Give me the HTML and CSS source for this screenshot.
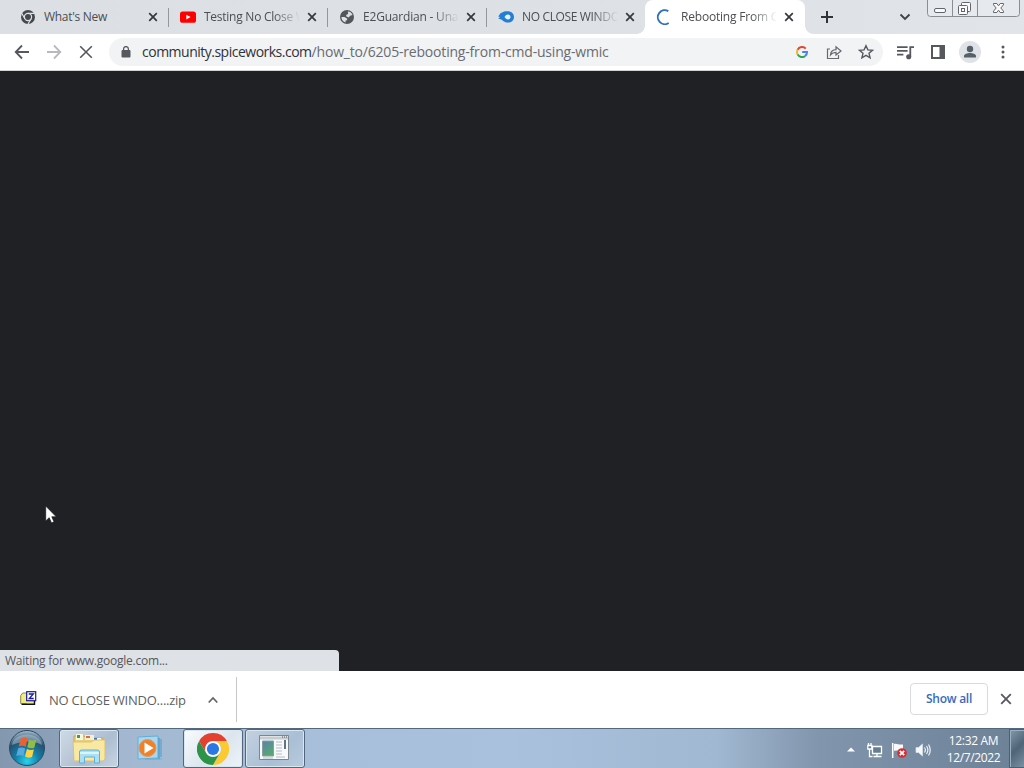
FILE: index.html
```html
<!DOCTYPE html>
<html lang="en">
<head>
<meta charset="utf-8">
<title>Rebooting From CMD</title>
<link rel="stylesheet" href="styles.css">
</head>
<body>
<div class="screen">
  <header class="tabs">
    <div class="tab">
      <svg class="fav" viewBox="0 0 16 16"><circle cx="8" cy="8" r="7" fill="#45494e"/><circle cx="8" cy="8" r="3.6" fill="#45494e" stroke="#dee1e6" stroke-width="1.2"/><path d="M8 4.4h6.4M4.9 9.8 1.7 4.3M11.1 9.8 8 15" stroke="#dee1e6" stroke-width="1.2"/></svg>
      <span class="title t1">What's New</span>
      <svg class="x" viewBox="0 0 10 10"><path d="m1.2 1.2 7.6 7.6m0-7.6L1.2 8.8"/></svg>
    </div>
    <div class="tab line">
      <svg class="fav" viewBox="0 0 16 16"><rect y="2.4" width="16" height="11.4" rx="2.6" fill="#f00"/><path d="m6.3 5.7 4.3 2.4-4.3 2.4z" fill="#fff"/></svg>
      <span class="title fade t2">Testing No Close W</span>
      <svg class="x" viewBox="0 0 10 10"><path d="m1.2 1.2 7.6 7.6m0-7.6L1.2 8.8"/></svg>
    </div>
    <div class="tab line">
      <svg class="fav" viewBox="0 0 16 16"><circle cx="8" cy="8" r="7" fill="#53575c"/><path d="M8.8 2.5c2.6 0 4.1 1.8 4.7 3.6L11 6.7 9.8 8.5 7.1 7.2l.3-1.4 1.8-.8zM2.4 8h3.200l2.700 1.700-.4 1.500-1.500.6.3 1.700C4 12.800 2.500 10.800 2.400 8z" fill="#dee1e6"/></svg>
      <span class="title fade t3">E2Guardian - Una</span>
      <svg class="x" viewBox="0 0 10 10"><path d="m1.2 1.2 7.6 7.6m0-7.6L1.2 8.8"/></svg>
    </div>
    <div class="tab line">
      <svg class="fav" viewBox="0 0 16 16"><path d="M2.500 4.200C5 2.600 7 2 10 2.200c3.600.2 6 2.600 6 5.700 0 3.400-2.500 5.700-6 5.700-2.800 0-4.300-.9-6.200-2.800L.2 9.600l2-1.500-2-.6z" fill="#247fd2"/><path d="M6.500 8.100c1-1.800 2-2.600 3.500-2.600s2.500 1.100 2.500 2.500-1 2.500-2.500 2.500-2.500-.8-3.500-2.400z" fill="#e5f2fb"/></svg>
      <span class="title fade t4">NO CLOSE WINDO</span>
      <svg class="x" viewBox="0 0 10 10"><path d="m1.2 1.2 7.6 7.6m0-7.6L1.2 8.8"/></svg>
    </div>
    <div class="tab active">
      <svg class="fav" viewBox="0 0 16 16"><path d="M12.3 2.1A7 7 0 1 0 12.7 14" fill="none" stroke="#2f6fc4" stroke-width="1.9"/></svg>
      <span class="title fade t5">Rebooting From C</span>
      <svg class="x" viewBox="0 0 10 10"><path d="m1.2 1.2 7.6 7.6m0-7.6L1.2 8.8"/></svg>
    </div>
    <svg class="plus" viewBox="0 0 14 14"><path d="M7 1v12M1 7h12" stroke="#303338" stroke-width="2"/></svg>
    <svg class="down" viewBox="0 0 12 8"><path d="m1.5 1.5 4.5 4.5 4.5-4.5" fill="none" stroke="#404449" stroke-width="1.9"/></svg>
    <svg class="caption" viewBox="0 0 94 18"><path d="M.5-1v14.500q0 3 3 3h86q3 0 3-3V-1M25.500 0v16.500M50.500 0v16.500" fill="#e6e9ed" stroke="#8a8e93"/><g fill="#fafafa" stroke="#62666b"><rect x="7.500" y="8.500" width="11" height="4" rx="1.500"/><rect x="34.500" y="2.500" width="9" height="9" rx="1"/><rect x="31.500" y="5.500" width="9" height="9" rx="1"/><rect x="34.500" y="8.500" width="3" height="3"/><path d="M66.500 3.500h3.300l1.700 2.300 1.700-2.300h3.300v1.300L73.800 8l2.700 3.200v1.300h-3.300l-1.700-2.300-1.700 2.300h-3.300v-1.300L69.200 8l-2.700-3.200z"/></g></svg>
  </header>

  <nav class="toolbar">
    <svg class="ic back" viewBox="0 0 16 16"><path d="M15 8H2M8 1.500 1.700 8 8 14.500" fill="none" stroke="#55595e" stroke-width="1.800"/></svg>
    <svg class="ic fwd" viewBox="0 0 16 16"><path d="M1 8h13M8 1.500 14.300 8 8 14.500" fill="none" stroke="#b7b9bc" stroke-width="1.800"/></svg>
    <svg class="ic stop" viewBox="0 0 16 16"><path d="m2.200 2.200 11.600 11.600m0-11.600L2.200 13.800" stroke="#55595e" stroke-width="1.600"/></svg>
    <div class="omnibox">
      <svg class="lock" viewBox="0 0 10 12"><rect x=".5" y="4" width="9" height="7.500" rx="1" fill="#55595e"/><path d="M2.600 4.500V3a2.400 2.400 0 0 1 4.800 0v1.500" fill="none" stroke="#55595e" stroke-width="1.300"/></svg>
      <span class="url"><b>community.spiceworks.com</b>/how_to/6205-rebooting-from-cmd-using-wmic</span>
      <svg class="g" viewBox="0 0 12 12"><g fill="none" stroke-width="2"><path d="M9.700 2.600A5 5 0 0 0 1.600 3.700" stroke="#e54335"/><path d="M1.600 3.700a5 5 0 0 0 0 4.700" stroke="#f4b72a"/><path d="M1.600 8.400a5 5 0 0 0 7.600 1.500" stroke="#34a353"/><path d="M9.200 9.900A5 5 0 0 0 11 6H6.200" stroke="#4285f4"/></g></svg>
      <svg class="share" viewBox="0 0 16 16"><path d="M4 5H1.500v9.500h11V11M4.500 11c.3-3.500 2.300-5.200 5.500-5.300V2.800L15 7l-5 4V8.300C7.600 8.300 6 9 4.500 11z" fill="none" stroke="#666a6f" stroke-width="1.200"/></svg>
      <svg class="star" viewBox="0 0 16 16"><path d="m8 1.700 1.900 4.200 4.600.4-3.500 3 1.100 4.500L8 11.400l-4.100 2.400L5 9.300l-3.500-3 4.600-.4z" fill="none" stroke="#55595e" stroke-width="1.400"/></svg>
    </div>
    <svg class="ic music" viewBox="0 0 16 16"><path d="M0 3h10M0 6.500h10M0 10h6M12.500 12V3H16" fill="none" stroke="#55595e" stroke-width="1.700"/><circle cx="11" cy="12" r="2.400" fill="#55595e"/></svg>
    <svg class="ic panel" viewBox="0 0 16 16"><path d="M1 1h14v14H1zM3 3v10h6.500V3z" fill="#55595e" fill-rule="evenodd"/></svg>
    <svg class="user" viewBox="0 0 22 22"><circle cx="11" cy="11" r="11" fill="#dfe2e6"/><circle cx="11" cy="8" r="3.200" fill="#55606a"/><path d="M5 16.500v-1.300c0-2.100 3.300-3.100 6-3.100s6 1 6 3.100v1.300z" fill="#55606a"/></svg>
    <svg class="ic dots" viewBox="0 0 16 16"><g fill="#55595e"><circle cx="8" cy="3" r="1.500"/><circle cx="8" cy="8" r="1.500"/><circle cx="8" cy="13" r="1.500"/></g></svg>
  </nav>

  <main class="page">
    <div class="status"><span>Waiting for www.google.com...</span></div>
    <svg class="cursor" viewBox="0 0 12 19"><path d="M.7 1v15l3.500-3.300 2.300 5.200 2.500-1.100-2.200-5h4.500z" fill="#fff" stroke="#17181a" stroke-width=".7"/></svg>
  </main>

  <section class="shelf">
    <div class="download">
      <svg class="zip" viewBox="0 0 17 17"><path d="M.7 13.500V5.500l2-2.500h4v10.500z" fill="#f0ec83" stroke="#8d8a42"/><path d="M1 13.500h13v-3H7" fill="#f0ec83"/><path d="M1.500 14.300h13V11" fill="none" stroke="#111" stroke-width="1.400"/><rect x="6.700" y="1.700" width="9" height="9" fill="#fff" stroke="#1b1b9c" stroke-width="1.200"/><path d="M8.700 4h4.600L9.300 8.500h4.400" fill="none" stroke="#1b1b9c" stroke-width="1.300"/></svg>
      <span class="file">NO CLOSE WINDO....zip</span>
      <svg class="up" viewBox="0 0 12 8"><path d="m1.700 6.500 4.300-4.500 4.300 4.500" fill="none" stroke="#606468" stroke-width="1.700"/></svg>
    </div>
    <button class="all"><span>Show all</span></button>
    <svg class="close" viewBox="0 0 12 12"><path d="m1.200 1.200 9.600 9.600m0-9.600-9.600 9.600" stroke="#55595e" stroke-width="1.800"/></svg>
  </section>

  <footer class="taskbar">
    <div class="start">
      <svg viewBox="0 0 38 38"><defs><radialGradient id="orb" cx=".5" cy=".88" r=".85"><stop offset="0" stop-color="#28d4ee"/><stop offset=".4" stop-color="#127fa8"/><stop offset=".75" stop-color="#28516f"/><stop offset="1" stop-color="#9cb3c6"/></radialGradient></defs><circle cx="19" cy="19" r="17.500" fill="url(#orb)" stroke="#2a4964"/><path d="M4 16C6 2 32 2 34 16 24 11 14 12 4 16z" fill="#c8d8e4" opacity=".45"/><path d="M13 9.500c2.500-1.500 4.500-1 6.500.3l-1.800 8c-2.500-1.300-4.400-1.300-7-.2z" fill="#ed6131"/><path d="M21 10.500c2.500 1.200 4.500 1.300 7.300.2l-2 8c-2.600 1-4.500.8-7-.5z" fill="#91bd45"/><path d="M10.200 19.200c2.600-1 4.700-.9 7 .4l-1.900 7.500c-2.300-1.200-4.500-1.300-7-.2z" fill="#58a9df"/><path d="M18.900 20c2.500 1.200 4.500 1.400 7 .6L24 28c-2.500 1-4.700.8-7-.4z" fill="#fbd246"/></svg>
    </div>
    <div class="task explorer">
      <svg viewBox="0 0 36 32"><path d="M3 6V3h10l2 2h17v22H3z" fill="#e8cf7d" stroke="#c7a95b"/><path d="M5 1h7v6H5z" fill="#f7f7df"/><path d="M6 2h3v3H6z" fill="#42975a"/><path d="M14 2h9v5h-9z" fill="#f8f0cc"/><path d="M15 3h4v2h-4z" fill="#ce714e"/><path d="M22 5h8v3h-8z" fill="#f4f9ff"/><path d="M23 5h3v2h-3z" fill="#3c76c5"/><path d="M2 9h18l3-2h11v19l-2 2H3z" fill="#f9e8a1" stroke="#dcc173"/><path d="M8.500 30V19q0-2 2-2h16q2 0 2 2v11h-5v-6h-10v6z" fill="#a9e0f5" stroke="#63afd4"/><path d="M9 20h19" stroke="#e9fbff" stroke-width="1.500"/></svg>
    </div>
    <div class="player">
      <svg viewBox="0 0 28 28"><path d="m7 1 16 2v20l3 1-4 1H8z" fill="#76b6d9"/><path d="m1 2 20-1v22L1 24z" fill="#aad6f0" stroke="#66add4"/><path d="M22 3v21M24 4v18" stroke="#4e9bc8"/><circle cx="10.500" cy="13" r="8.500" fill="#f18127" stroke="#d99b67"/><path d="m7.500 7.500 9 5.500-9 5.500z" fill="#fff"/></svg>
    </div>
    <div class="task chrome">
      <svg viewBox="0 0 32 32"><path d="M2.140 8A16 16 0 0 1 29.860 8H16a8 8 0 0 0-6.930 12z" fill="#e3402f"/><path d="M29.860 8A16 16 0 0 1 16 32l6.930-12A8 8 0 0 0 16 8z" fill="#fbc934"/><path d="M16 32A16 16 0 0 1 2.140 8l6.930 12a8 8 0 0 0 13.860 0z" fill="#2d9348"/><circle cx="16" cy="16" r="7.600" fill="#fff"/><circle cx="16" cy="16" r="6.100" fill="#2b78e4"/></svg>
    </div>
    <div class="task app">
      <svg viewBox="0 0 30 26"><defs><linearGradient id="pic" x2=".5" y2="1"><stop stop-color="#5a82ad"/><stop offset="1" stop-color="#59a672"/></linearGradient></defs><path d="M.5.500h29v24H.5z" fill="#f8f9fa" stroke="#7d858d"/><path d="M1 3h28" stroke="#c6cbd0" stroke-width="3"/><path d="M23 2h5" stroke="#555" stroke-dasharray="1 1"/><path d="M3.500 6h11v15h-11z" fill="url(#pic)" stroke="#879ea5"/><path d="M17 7h6M17 10h6M17 13h6M17 16h6M17 19h6M4 23h10M17 22h9" stroke="#b6bbc2"/><path d="M26 5v9" stroke="#34475d" stroke-width="1.500"/></svg>
    </div>
    <div class="tray">
      <svg class="arr" viewBox="0 0 8 5"><path d="m0 4.500 4-4 4 4z" fill="#fff"/></svg>
      <svg class="net" viewBox="0 0 16 16"><path d="M5.500 4.500h9v7h-9zM6.500 14.500h8M10 12v2M2.500 7v7.500h3M.8 3.500h4V7h-4zM1.500 1v2M4 1v2" fill="#667c93" stroke="#fff" stroke-width="1.300"/></svg>
      <svg class="flag" viewBox="0 0 16 16"><path d="M1.700 1v15" stroke="#fff" stroke-width="1.500"/><path d="M3 2c3-1 4 1 9 .5v6C8 9 6 8 3 9z" fill="#f8f9fb"/><circle cx="11" cy="11" r="4.800" fill="#d52e35"/><path d="m8.800 8.800 4.400 4.400m0-4.400-4.400 4.400" stroke="#fff" stroke-width="1.700"/></svg>
      <svg class="vol" viewBox="0 0 16 16"><path d="M1 5.500h2.500L7.500 2v12l-4-3.500H1z" fill="#f5f7f9" stroke="#dce3e9" stroke-width=".7"/><path d="M9.500 5.500q1.800 2.500 0 5M11.500 4q2.800 4 0 8M13.500 2.500q3.500 5.500 0 11" fill="none" stroke="#edf2f6" stroke-width="1.200"/></svg>
      <div class="clock"><span>12:32 AM</span><span>12/7/2022</span></div>
      <div class="desktop"></div>
    </div>
  </footer>
</div>
</body>
</html>
```
FILE: styles.css
```css
* { box-sizing: border-box; }
body { margin: 0; font-family: "Open Sans", "Noto Sans", sans-serif; overflow: hidden; }
svg { display: block; flex: none; }
.screen { width: 1024px; height: 768px; display: flex; flex-direction: column; }
.tabs { height: 34px; flex: none; background: linear-gradient(90deg, #dce0e4, #dee1e6 70%, #e1e4e9); display: flex; align-items: flex-start; padding-left: 9px; }
.tab { width: 159px; height: 34px; display: flex; align-items: center; padding: 0 10px 0 11px; flex: none; background: linear-gradient(#94989d, #94989d) 0 8px / 0 19px no-repeat; }
.tab.line { background-size: 1px 19px; padding-left: 12px; }
.tab.line .x, .tab.active .x { margin-left: 7px; }
.fav { width: 16px; height: 16px; }
.title { width: 96px; margin-left: 8px; font-size: 12px; line-height: 16px; white-space: nowrap; overflow: hidden; color: #4b4e52; }
.t1 { letter-spacing: -.3px; }
.t2 { letter-spacing: -.25px; }
.t3 { letter-spacing: -.2px; }
.t4 { letter-spacing: -.35px; }
.t5 { letter-spacing: -.2px; }
.fade { -webkit-mask-image: linear-gradient(90deg, #000 70px, transparent 96px); mask-image: linear-gradient(90deg, #000 70px, transparent 96px); }
.x { width: 10px; height: 10px; margin-left: 8px; stroke: #35383c; stroke-width: 1.7; }
.active { background: #fff; border-radius: 8px 8px 0 0; width: 160px; position: relative; padding-left: 12px; }
.active::before, .active::after { content: ""; position: absolute; bottom: 0; width: 8px; height: 8px; }
.active::before { left: -8px; background: radial-gradient(circle at 0 0, transparent 7.5px, #fff 8px); }
.active::after { right: -8px; background: radial-gradient(circle at 100% 0, transparent 7.5px, #fff 8px); }
.active .fav { margin-left: -1px; }
.active .title { margin-left: 9px; }
.plus { width: 14px; height: 14px; margin: 10px 0 0 15px; }
.down { width: 12px; height: 8px; margin: 13px 0 0 65px; }
.caption { width: 94px; height: 18px; margin-left: 16px; }
.toolbar { height: 37px; flex: none; display: flex; align-items: center; background: #fff; border-bottom: 1px solid #d3d4d6; padding: 0 14px; }
.ic { width: 16px; height: 16px; }
.fwd, .stop { margin-left: 16px; }
.omnibox { margin-left: 15px; width: 774px; height: 28px; border-radius: 14px; background: #f2f3f4; display: flex; align-items: center; padding: 0 9px 0 12px; }
.lock { width: 10px; height: 12px; }
.url { margin-left: 11px; width: 654px; font-size: 14px; line-height: 20px; color: #696c70; white-space: nowrap; letter-spacing: -.19px; }
.url b { font-weight: 400; color: #303236; letter-spacing: -.5px; }
.g { width: 12px; height: 12px; }
.share { width: 16px; height: 16px; margin-left: 18px; }
.star { width: 16px; height: 16px; margin-left: 16px; }
.music { margin-left: 14px; width: 17px; height: 17px; }
.panel { margin-left: 16px; }
.user { width: 22px; height: 22px; margin-left: 13px; }
.dots { margin-left: 13.5px; }
.page { height: 600px; background: #202124; display: flex; align-items: flex-end; position: relative; }
.status { width: 339px; height: 21px; background: #dee1e6; border-radius: 0 4px 0 0; padding-left: 5px; font-size: 12px; line-height: 21px; color: #55585d; letter-spacing: -.23px; }
.cursor { position: absolute; left: 45px; top: 434px; width: 12px; height: 19px; }
.shelf { height: 57px; flex: none; background: #fff; display: flex; align-items: center; padding-right: 12px; }
.download { width: 237px; height: 45px; border-right: 1px solid #c5c7ca; display: flex; align-items: center; padding-left: 20px; }
.zip { width: 17px; height: 17px; margin-top: -3px; }
.file { margin-left: 12px; width: 138px; font-size: 13px; color: #5c5f63; white-space: nowrap; letter-spacing: -.25px; }
.up { width: 12px; height: 8px; margin-left: 20px; }
.all { margin: 0 0 2px auto; width: 78px; height: 32px; background: #fff; border: 1px solid #d7dade; border-radius: 4px; color: #386ac0; font: 600 12px "Open Sans", sans-serif; padding: 0; letter-spacing: -.25px; }
.close { width: 12px; height: 12px; margin: 0 0 2px 12px; }
.taskbar { height: 40px; flex: none; display: flex; border-top: 1px solid #53677d; background: linear-gradient(90deg, #8397ae 0, #8da2ba 58px, #a3b8d0 120px, #a7bfda 320px, #a9c1dd 50%, #a1b8d2 70%, #8195ac 80%, #74899f 92%, #6d8196); }
.start { width: 59px; padding-left: 8px; }
.start svg { width: 38px; height: 38px; }
.task { width: 60px; height: 39px; border: 1px solid #53667d; border-radius: 3px; background: linear-gradient(135deg, #d0dae5, #adbed2 60%, #c8d4e1); box-shadow: inset 0 0 0 1px #dce6ef; display: flex; justify-content: center; align-items: center; }
.explorer svg { width: 36px; height: 32px; }
.player { width: 64px; padding: 6px 0 0 18px; }
.player svg { width: 28px; height: 28px; }
.chrome { background: linear-gradient(135deg, #fafcfe, #dce5ee 55%, #edf3f8); }
.chrome svg { width: 32px; height: 32px; }
.app { margin-left: 2px; background: linear-gradient(135deg, #c4d1e0, #a9bfd6 60%, #b9cbdd); }
.app svg { width: 30px; height: 26px; margin: -2px 2px 0 0; }
.tray { margin-left: auto; display: flex; align-items: center; height: 39px; }
.arr { width: 8px; height: 5px; margin-top: 1px; }
.net { width: 16px; height: 16px; margin: 2px 0 0 12px; }
.flag { width: 16px; height: 16px; margin: 2px 0 0 8px; }
.vol { width: 16px; height: 16px; margin: 2px 0 0 8px; }
.clock { margin-left: 10px; width: 65px; font-size: 12px; line-height: 17px; text-align: center; color: #fff; display: flex; flex-direction: column; letter-spacing: -.35px; }
.desktop { width: 15px; height: 39px; margin-left: 3px; border: 1px solid #4c6073; border-right: 0; box-shadow: inset 1px 1px #9aafbf; background: linear-gradient(135deg, #8499aa, #4f6476 50%, #7b90a3); }
```
